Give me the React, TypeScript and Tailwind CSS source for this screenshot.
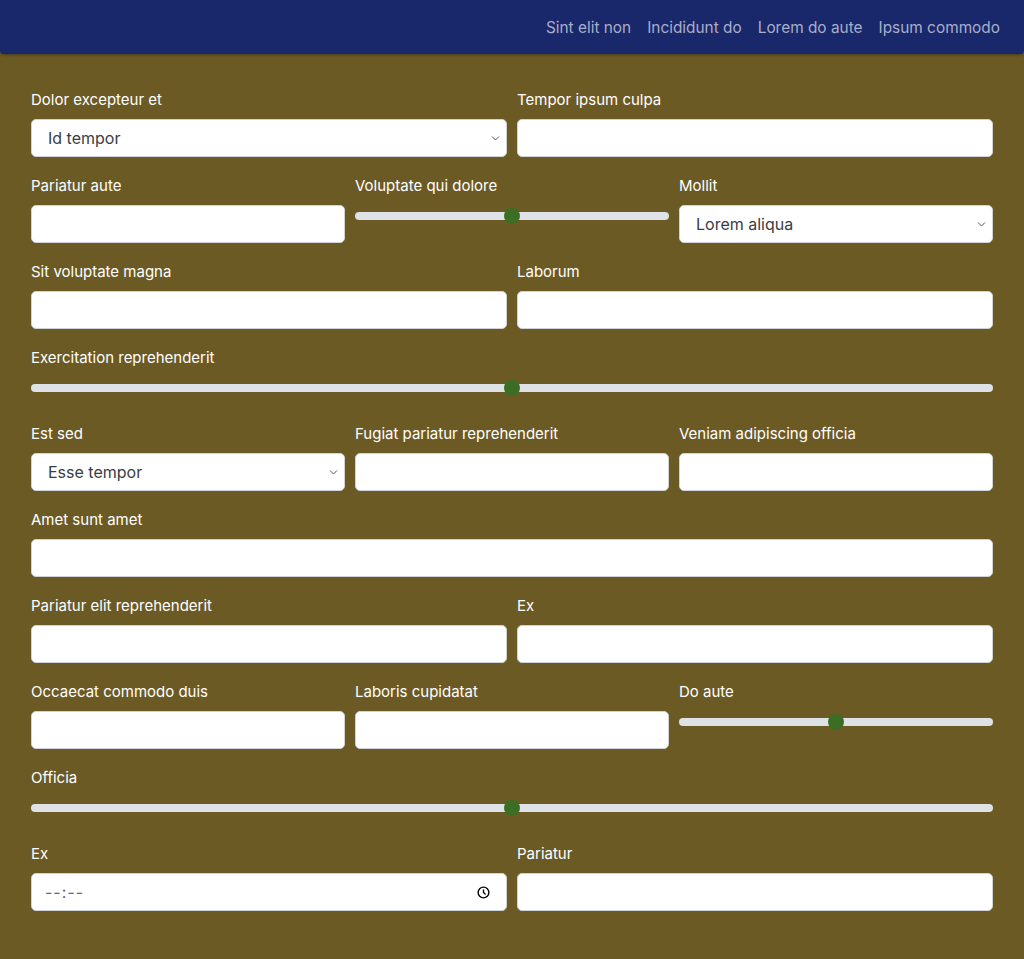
import React from 'react'

const navLinks = ['Sint elit non', 'Incididunt do', 'Lorem do aute', 'Ipsum commodo']

const inputCls =
  'block h-[38px] w-full rounded-[5px] border border-[#ced4da] bg-white px-4 text-base text-[#383d44] outline-none'

function Label({ children }: { children: React.ReactNode }) {
  return <label className="mb-[9px] block h-[22px] text-[15px] leading-[24px] text-white">{children}</label>
}

function TextField({ label }: { label: string }) {
  return (
    <div>
      <Label>{label}</Label>
      <input type="text" className={inputCls} />
    </div>
  )
}

function SelectField({ label, value }: { label: string; value: string }) {
  return (
    <div>
      <Label>{label}</Label>
      <div className="relative">
        <select className={inputCls + ' appearance-none'} defaultValue={value}>
          <option>{value}</option>
        </select>
        <svg
          className="pointer-events-none absolute right-[7px] top-[15px] h-[8px] w-[9px] text-[#555]"
          viewBox="0 0 9 8"
          fill="none"
          stroke="currentColor"
          strokeWidth="1"
        >
          <path d="M1 2.5l3.5 3.5L8 2.5" />
        </svg>
      </div>
    </div>
  )
}

function RangeField({ label }: { label: string }) {
  return (
    <div>
      <Label>{label}</Label>
      <div className="h-[28px] pt-[1px]">
        <input
          type="range"
          defaultValue={50}
          className="block h-5 w-full cursor-pointer appearance-none bg-transparent [&::-webkit-slider-runnable-track]:h-[8px] [&::-webkit-slider-runnable-track]:rounded-full [&::-webkit-slider-runnable-track]:bg-[#dee2e6] [&::-webkit-slider-thumb]:mt-[-4px] [&::-webkit-slider-thumb]:h-[16px] [&::-webkit-slider-thumb]:w-[16px] [&::-webkit-slider-thumb]:appearance-none [&::-webkit-slider-thumb]:rounded-full [&::-webkit-slider-thumb]:bg-[#3b6e24]"
        />
      </div>
    </div>
  )
}

function TimeField({ label }: { label: string }) {
  return (
    <div>
      <Label>{label}</Label>
      <div className="flex h-[38px] w-full items-center justify-between rounded-[5px] border border-[#ced4da] bg-white pl-[13px] pr-[16px] text-base text-[#6b6b6b]">
        <span className="tracking-[1px]">--:--</span>
        <svg className="h-[13px] w-[13px] text-black" viewBox="0 0 14 14" fill="none" stroke="currentColor" strokeWidth="1.5">
          <circle cx="7" cy="7" r="5.8" />
          <path d="M7 3.8V7l2.2 2.2" />
        </svg>
      </div>
    </div>
  )
}

export default function App() {
  return (
    <div className="min-h-screen bg-[#6c5a24] font-['Inter',sans-serif]">
      <header className="flex h-[54px] items-center justify-end gap-4 rounded-b-[4px] bg-[#19286a] px-6 pt-[2px] shadow-[0_1px_3px_rgba(0,0,0,0.35)]">
        {navLinks.map((l) => (
          <a key={l} href="#" className="text-[15.4px] text-[#a9aecb]">
            {l}
          </a>
        ))}
      </header>

      <main className="flex flex-col gap-[17px] px-[31px] pb-12 pt-[34px]">
        <div className="grid grid-cols-2 gap-[10px]">
          <SelectField label="Dolor excepteur et" value="Id tempor" />
          <TextField label="Tempor ipsum culpa" />
        </div>
        <div className="grid grid-cols-3 gap-[10px]">
          <TextField label="Pariatur aute" />
          <RangeField label="Voluptate qui dolore" />
          <SelectField label="Mollit" value="Lorem aliqua" />
        </div>
        <div className="grid grid-cols-2 gap-[10px]">
          <TextField label="Sit voluptate magna" />
          <TextField label="Laborum" />
        </div>
        <RangeField label="Exercitation reprehenderit" />
        <div className="grid grid-cols-3 gap-[10px]">
          <SelectField label="Est sed" value="Esse tempor" />
          <TextField label="Fugiat pariatur reprehenderit" />
          <TextField label="Veniam adipiscing officia" />
        </div>
        <TextField label="Amet sunt amet" />
        <div className="grid grid-cols-2 gap-[10px]">
          <TextField label="Pariatur elit reprehenderit" />
          <TextField label="Ex" />
        </div>
        <div className="grid grid-cols-3 gap-[10px]">
          <TextField label="Occaecat commodo duis" />
          <TextField label="Laboris cupidatat" />
          <RangeField label="Do aute" />
        </div>
        <RangeField label="Officia" />
        <div className="grid grid-cols-2 gap-[10px]">
          <TimeField label="Ex" />
          <TextField label="Pariatur" />
        </div>
      </main>
    </div>
  )
}
